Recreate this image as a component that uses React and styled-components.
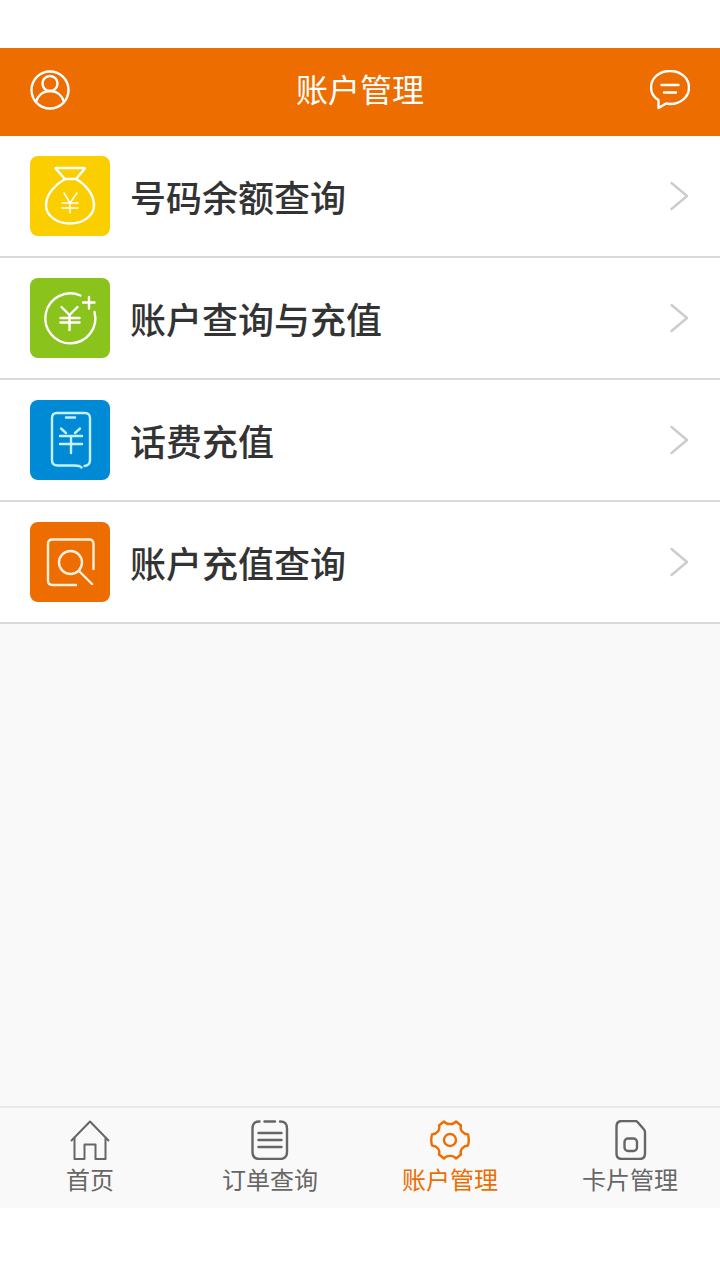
import React from "react";
import styled, { createGlobalStyle } from "styled-components";

const GlobalStyle = createGlobalStyle`
  * {
    box-sizing: border-box;
  }
  body {
    margin: 0;
    background-color: #fff;
    font-family: "Noto Sans CJK SC", sans-serif;
  }
`;

const Container = styled.div`
  min-height: 100vh;
  padding: 48px 0 72px;
  display: flex;
  flex-direction: column;
`;
const Header = styled.header`
  height: 88px;
  padding: 0 30px 4px;
  display: flex;
  align-items: center;
  justify-content: space-between;
  color: white;
  background-color: #ed6d00;
`;
const Title = styled.h1`
  margin: 0;
  padding-bottom: 4px;
  font-size: 32px;
  font-weight: 400;
  line-height: 44px;
`;
const IconButton = styled.button`
  width: 40px;
  height: 40px;
  padding: 0;
  border: none;
  color: inherit;
  background: none;
  cursor: pointer;
`;
const Icon = styled.svg`
  display: block;
  width: 40px;
  height: 40px;
  fill: none;
  stroke: currentColor;
  stroke-width: 2.4;
  stroke-linecap: round;
  stroke-linejoin: round;
`;
const Main = styled.main`
  flex: 1;
  background-color: #f9f9f9;
`;
const Menu = styled.ul`
  margin: 0;
  padding: 0;
  list-style: none;
`;
const MenuItem = styled.li`
  border-bottom: 2px solid #d9d9d9;
  background-color: white;
`;
const MenuLink = styled.a`
  height: 120px;
  padding: 0 30px;
  display: flex;
  align-items: center;
  gap: 20px;
  color: #333;
  text-decoration: none;
`;
const Tile = styled.span`
  border-radius: 8px;
  color: white;
  background-color: ${(props) => props.$color};
`;
const TileIcon = styled(Icon)`
  width: 80px;
  height: 80px;
`;
const MenuText = styled.span`
  flex: 1;
  font-size: 36px;
  font-weight: 500;
  line-height: 48px;
`;
const Chevron = styled(Icon)`
  width: 20px;
  color: #ccc;
`;
const TabBar = styled.nav`
  display: flex;
  border-top: 2px solid #e8e8e8;
  background-color: #f9f9f9;
`;
const Tab = styled.a`
  flex: 1;
  height: 100px;
  padding-top: 12px;
  display: flex;
  flex-direction: column;
  align-items: center;
  color: ${(props) => (props.$active ? "#ed6d00" : "#666")};
  font-size: 24px;
  line-height: 38px;
  text-decoration: none;
`;

const menu = [
  {
    text: "号码余额查询",
    color: "#fbce00",
    icon: (
      <>
        <path d="M35 23L26 13Q25 12 26.500 12H54Q55.500 12 54.500 13L46 23Z" />
        <path d="M35 23C26 28 16 38 16 49C16 60 27 67.500 40 67.500S64 60 64 49C64 38 55 28 46 23" />
        <path
          d="M34 37L40 47L47 37M32 47H48M32 52H48M40 47V57"
          strokeWidth="1.5"
        />
      </>
    ),
  },
  {
    text: "账户查询与充值",
    color: "#8ac31c",
    icon: (
      <>
        <path d="M50.500 17.500A25 25 0 1 0 64.500 34" />
        <path d="M59 19V30.500M53 24.500H64.500" />
        <path d="M31.500 29L39.500 37L47.500 29M30.500 40H49.500M30.500 44.500H49.500M39.500 37V52" />
      </>
    ),
  },
  {
    text: "话费充值",
    color: "#008ad6",
    icon: (
      <g stroke="#c4f1ff">
        <path d="M54.500 66Q60 65.500 60 60V18Q60 13 55 13H27Q22 13 22 18V60Q22 65.500 27.500 65.500H44Q50 65.500 51.500 67.500" />
        <path d="M36 17.500H45" />
        <path d="M31 28.500L36 33M50 28.500L45 33M30 36H52M30 44H52M41 36V53" />
      </g>
    ),
  },
  {
    text: "账户充值查询",
    color: "#ed6d00",
    icon: (
      <g stroke="#fff0df">
        <path d="M63.500 47V22Q63.500 17.500 59 17.500H22.500Q18 17.500 18 22V58.500Q18 63 22.500 63H46" />
        <circle cx="40.500" cy="40.500" r="11.500" />
        <path d="M49 49L62 62" />
      </g>
    ),
  },
];

const tabs = [
  {
    text: "首页",
    icon: (
      <path
        d="M1.500 20.500L20 1.500L38.500 20.500M4.500 18V39H14.500V24.500H25.500V39H35.500V18"
        strokeWidth="2"
      />
    ),
  },
  {
    text: "订单查询",
    icon: (
      <>
        <path d="M9.500 1.500Q2.500 1.500 2.500 8.500V32Q2.500 39 9.500 39H30Q37 39 37 32V8.500Q37 1.500 30 1.500M14.500 1.500H25" />
        <path d="M8.500 13H31.500M8.500 20H31.500M8.500 27H31.500" />
      </>
    ),
  },
  {
    text: "账户管理",
    active: true,
    icon: (
      <>
        <path d="M14 1.500C16.500 5 23.500 5 26 1.500L31 5.500C29.500 10 33 14 38 14.500Q39.500 20 38 25.500C33 26 29.500 30 31 34.500L26 38.500C23.500 35 16.500 35 14 38.500L9 34.500C10.500 30 7 26 2 25.500Q.5 20 2 14.500C7 14 10.500 10 9 5.500Z" />
        <circle cx="20" cy="20" r="6" />
      </>
    ),
  },
  {
    text: "卡片管理",
    icon: (
      <>
        <path d="M25.500 1H12Q6.500 1 6.500 6.500V33.500Q6.500 39 12 39H29.500Q35 39 35 33.500V12Q35 10.500 34 9.500L27.500 2Q26.500 1 25.500 1Z" />
        <rect x="14.500" y="18.500" width="12.500" height="12.500" rx="3.500" />
      </>
    ),
  },
];

const App = () => {
  return (
    <Container>
      <GlobalStyle />
      <Header>
        <IconButton aria-label="我的">
          <Icon viewBox="0 0 40 40">
            <circle cx="20" cy="20" r="18.500" />
            <circle cx="20" cy="13.500" r="7.500" />
            <path d="M6 32C8 25 13.500 21 20 21S32 25 34 32" />
          </Icon>
        </IconButton>
        <Title>账户管理</Title>
        <IconButton aria-label="消息">
          <Icon viewBox="0 0 40 40">
            <path d="M8.500 38V30C3.500 27 1 22 1 17.500C1 8 9.500 1 20 1S39 8 39 17.500S30.500 34 20 34L16 33.500Z" />
            <path d="M11.500 15H28.500M14 22.500H26" />
          </Icon>
        </IconButton>
      </Header>
      <Main>
        <Menu>
          {menu.map((item) => (
            <MenuItem key={item.text}>
              <MenuLink href="#">
                <Tile $color={item.color}>
                  <TileIcon viewBox="0 0 80 80">{item.icon}</TileIcon>
                </Tile>
                <MenuText>{item.text}</MenuText>
                <Chevron viewBox="0 0 20 40">
                  <path d="M1.500 7L17 20L1.500 33" />
                </Chevron>
              </MenuLink>
            </MenuItem>
          ))}
        </Menu>
      </Main>
      <TabBar>
        {tabs.map((tab) => (
          <Tab
            key={tab.text}
            href="#"
            $active={tab.active}
            aria-current={tab.active ? "page" : undefined}
          >
            <Icon viewBox="0 0 40 40">{tab.icon}</Icon>
            {tab.text}
          </Tab>
        ))}
      </TabBar>
    </Container>
  );
};

export default App;
